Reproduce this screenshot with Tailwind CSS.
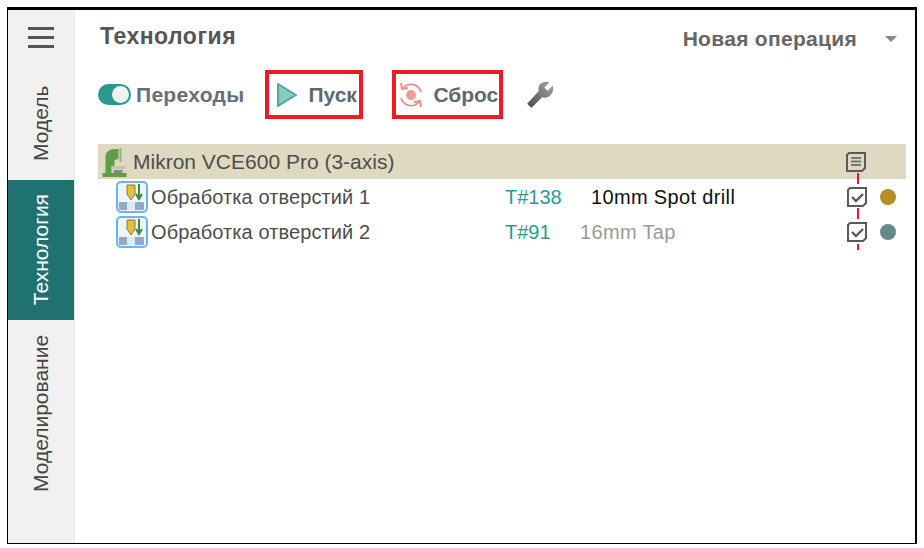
<!DOCTYPE html>
<html lang="en">
<head>
    <meta charset="UTF-8">
    <title>Технология</title>
    <script src="https://cdn.jsdelivr.net/npm/@tailwindcss/browser@4"></script>
</head>
<body class="bg-white w-[924px] h-[548px] overflow-hidden relative font-['Liberation_Sans',sans-serif]">
    <div class="ml-[7px] mt-[7px] w-[910px] h-[537px] border-t-[3px] border-l border-r-2 border-b border-black flex">
        <!-- side tabs -->
        <div class="w-[67px] shrink-0 bg-[#f1f1f1] border-r border-[#e6e6e6] flex flex-col">
            <div class="h-[170px] flex flex-col items-center">
                <div class="mt-[17px] w-[26px] flex flex-col gap-[6px]">
                    <div class="h-[3px] bg-[#555555]"></div>
                    <div class="h-[3px] bg-[#555555]"></div>
                    <div class="h-[3px] bg-[#555555]"></div>
                </div>
                <div class="mt-[37px] h-[76px] flex items-center justify-center [writing-mode:vertical-rl] rotate-180 text-[21px] text-[#444444]">Модель</div>
            </div>
            <div class="h-[140px] bg-[#1f7270] flex items-center justify-center">
                <span class="[writing-mode:vertical-rl] rotate-180 text-[21px] text-white">Технология</span>
            </div>
            <div class="flex-1 flex justify-center pt-[15px]">
                <span class="h-[157px] text-center [writing-mode:vertical-rl] rotate-180 text-[21px] text-[#444444]">Моделирование</span>
            </div>
        </div>

        <!-- main panel -->
        <div class="flex-1 min-w-0 pl-[23px] pr-[9px]">
            <div class="h-[36px] pt-[17px] pl-[2px] flex items-center justify-between">
                <span class="text-[23px] tracking-[0.5px] font-bold text-[#555555] leading-none">Технология</span>
                <div class="flex items-center mt-[4px] mr-[9px]">
                    <span class="text-[21px] tracking-[0.3px] font-bold text-[#666666] leading-none">Новая операция</span>
                    <div class="ml-[28px] w-0 h-0 border-x-[6px] border-x-transparent border-t-[6px] border-t-[#888888]"></div>
                </div>
            </div>

            <div class="mt-[24px] h-[49px] flex items-center">
                <div class="w-[33px] h-[21px] rounded-full bg-[#269a8e] flex items-center justify-end pr-[2px]">
                    <div class="w-[17px] h-[17px] rounded-full bg-[#f2f2f2]"></div>
                </div>
                <span class="ml-[5px] text-[21px] tracking-[0.3px] font-bold text-[#66707a] leading-none">Переходы</span>

                <div class="ml-[21px] w-[98px] h-[49px] border-[4px] border-[#ed1c24] flex items-center pl-[7px]">
                    <svg width="22" height="26" viewBox="0 0 22 26">
                        <path d="M2 2 L20 13 L2 24 Z" fill="#8cc7c1" stroke="#4ea79d" stroke-width="2" stroke-linejoin="round"/>
                    </svg>
                    <span class="ml-[10px] text-[21px] font-bold text-[#5f6770] leading-none">Пуск</span>
                </div>

                <div class="ml-[29px] w-[111px] h-[49px] border-[4px] border-[#ed1c24] flex items-center pl-[2px]">
                    <svg width="26" height="26" viewBox="0 0 26 26" fill="none" stroke="#f08a88" stroke-width="1.8">
                        <circle cx="13" cy="13" r="5" fill="#f29a98" stroke="none"/>
                        <path d="M5 6 A10.5 10.5 0 0 1 23 10"/>
                        <path d="M21 20 A10.5 10.5 0 0 1 3 16"/>
                        <path d="M3 1 L4 7 L10 6"/>
                        <path d="M23 25 L22 19 L16 20"/>
                    </svg>
                    <span class="ml-[9px] text-[21px] font-bold text-[#5f6770] leading-none">Сброс</span>
                </div>

                <svg class="ml-[22px] mb-[2px]" width="30" height="30" viewBox="0 0 28 28">
                    <defs>
                        <linearGradient id="wrench" x1="0" y1="1" x2="1" y2="0">
                            <stop offset="0" stop-color="#4a4a4a"/>
                            <stop offset="1" stop-color="#a8a8a8"/>
                        </linearGradient>
                    </defs>
                    <path d="M2 23 L13 11 C11 6 16 1 23 3 L18 8 L21 11 L26 6 C28 13 22 19 16 17 L6 27 Z" fill="url(#wrench)"/>
                </svg>
            </div>

            <!-- tree -->
            <div class="mt-[25px]">
                <div class="h-[35px] bg-[#dfd9c2] flex items-center pl-[3px] pr-[39px]">
                    <svg width="27" height="32" viewBox="0 0 26 32">
                        <path d="M1 31 V27 H4 V11 C4 6 8 3 13 3 L17 3 V13 L13 14 V20 H10 V27 H25 V31 Z" fill="#5f9e48"/>
                        <rect x="10" y="20" width="14" height="3" fill="#c4c4b4"/>
                        <rect x="12" y="24" width="9" height="3" fill="#8a8a7a"/>
                        <rect x="18" y="2" width="2" height="14" fill="#8ab878"/>
                    </svg>
                    <span class="ml-[5px] text-[21px] text-[#4d4d4d] leading-none">Mikron VCE600 Pro (3-axis)</span>
                    <svg class="ml-auto" width="22" height="24" viewBox="0 0 22 24" fill="none" stroke="#5a5a5a">
                        <path d="M4 3 H20 V18 L17 21 H2 V5 Z" stroke-width="2"/>
                        <path d="M6 8 H16 M6 11.5 H16 M6 15 H16" stroke="#777777" stroke-width="2"/>
                    </svg>
                </div>

                <div class="h-[35px] flex items-center pl-[18px] pr-[10px]">
                    <svg width="32" height="32" viewBox="0 0 32 32">
                        <rect x="1" y="1" width="30" height="30" rx="4" fill="#eef5fc" stroke="#6eb2f2" stroke-width="2"/>
                        <rect x="3" y="21" width="8" height="8" fill="#8faac8"/>
                        <rect x="11" y="21" width="8" height="8" fill="#dfe9f4"/>
                        <rect x="19" y="21" width="9" height="8" fill="#8faac8"/>
                        <path d="M11 4 H19 V13 L15 19 L11 13 Z" fill="#e5c040" stroke="#8a7a30" stroke-width="1"/>
                        <path d="M23 3 V16 M20 13 L23 18 L26 13" fill="none" stroke="#3a8c3a" stroke-width="2"/>
                    </svg>
                    <span class="ml-[3px] w-[354px] text-[20px] tracking-[0.1px] text-[#4d4d4d] leading-none">Обработка отверстий 1</span>
                    <span class="w-[86px] text-[20px] text-[#2a9d94] leading-none">T#138</span>
                    <span class="text-[20px] tracking-[0.35px] text-[#111111] leading-none">10mm Spot drill</span>
                    <svg class="ml-auto mr-[12px]" width="22" height="24" viewBox="0 0 22 24" fill="none" stroke="#5a5a5a">
                        <path d="M4 3 H20 V18 L17 21 H2 V5 Z" stroke-width="2"/>
                        <path d="M6 12 L10 16 L17 9" stroke-width="2.4"/>
                    </svg>
                    <div class="w-[16px] h-[16px] rounded-full bg-[#b88d22]"></div>
                </div>

                <div class="h-[35px] flex items-center pl-[18px] pr-[10px]">
                    <svg width="32" height="32" viewBox="0 0 32 32">
                        <rect x="1" y="1" width="30" height="30" rx="4" fill="#eef5fc" stroke="#6eb2f2" stroke-width="2"/>
                        <rect x="3" y="21" width="8" height="8" fill="#8faac8"/>
                        <rect x="11" y="21" width="8" height="8" fill="#dfe9f4"/>
                        <rect x="19" y="21" width="9" height="8" fill="#8faac8"/>
                        <path d="M11 4 H19 V13 L15 19 L11 13 Z" fill="#e5c040" stroke="#8a7a30" stroke-width="1"/>
                        <path d="M23 3 V16 M20 13 L23 18 L26 13" fill="none" stroke="#3a8c3a" stroke-width="2"/>
                    </svg>
                    <span class="ml-[3px] w-[354px] text-[20px] tracking-[0.1px] text-[#4d4d4d] leading-none">Обработка отверстий 2</span>
                    <span class="w-[75px] text-[20px] text-[#2a9d94] leading-none">T#91</span>
                    <span class="text-[20px] tracking-[0.35px] text-[#9a9a9a] leading-none">16mm Tap</span>
                    <svg class="ml-auto mr-[12px]" width="22" height="24" viewBox="0 0 22 24" fill="none" stroke="#5a5a5a">
                        <path d="M4 3 H20 V18 L17 21 H2 V5 Z" stroke-width="2"/>
                        <path d="M6 12 L10 16 L17 9" stroke-width="2.4"/>
                    </svg>
                    <div class="w-[16px] h-[16px] rounded-full bg-[#628a8c]"></div>
                </div>
            </div>
        </div>
    </div>

    <!-- red dashed guide over the tree icons -->
    <div class="absolute left-[857px] top-[173px] w-[2px] h-[11px] bg-[#ed1c24]"></div>
    <div class="absolute left-[857px] top-[208px] w-[2px] h-[11px] bg-[#ed1c24]"></div>
    <div class="absolute left-[857px] top-[244px] w-[2px] h-[6px] bg-[#ed1c24]"></div>
</body>
</html>
